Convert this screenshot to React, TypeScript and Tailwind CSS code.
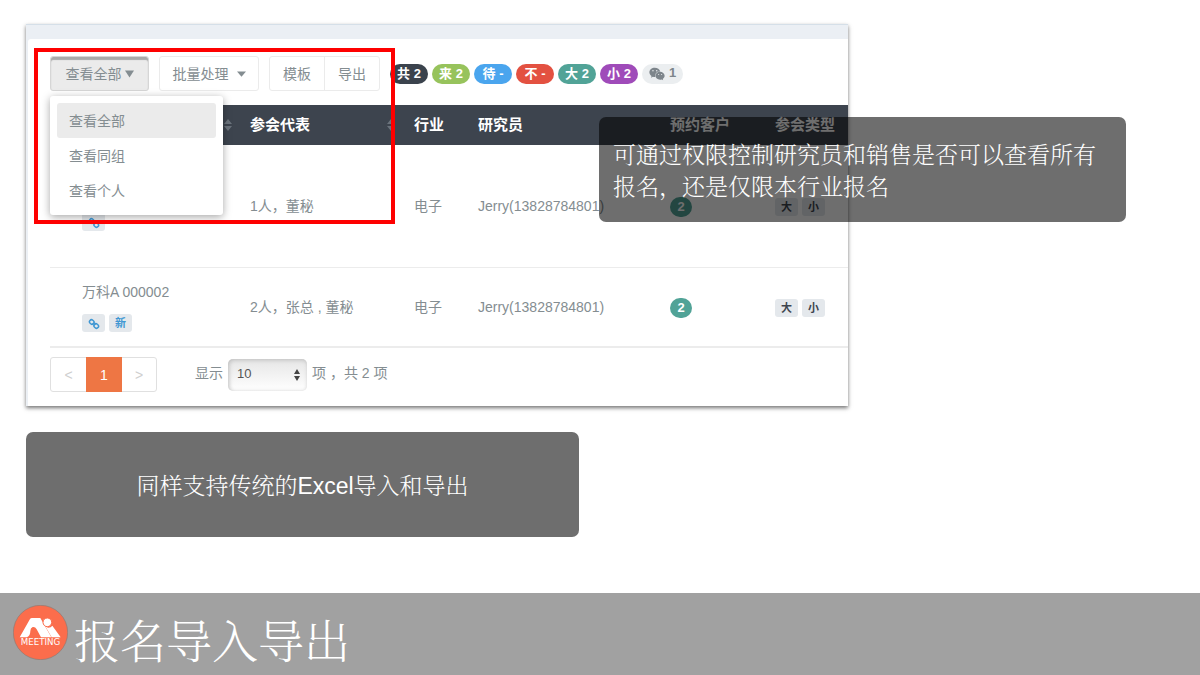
import { useState, type ReactNode } from 'react';
import { FaWeixin } from 'react-icons/fa';

interface Row {
  id: number;
  company?: string;
  isNew: boolean;
  guests: string;
  industry: string;
  researcher: string;
  booked: number;
  types: string[];
  height: string;
}

const rows: Row[] = [
  {
    id: 1,
    isNew: false,
    guests: '1人，董秘',
    industry: '电子',
    researcher: 'Jerry(13828784801)',
    booked: 2,
    types: ['大', '小'],
    height: 'h-[122px]',
  },
  {
    id: 2,
    company: '万科A 000002',
    isNew: true,
    guests: '2人，张总 , 董秘',
    industry: '电子',
    researcher: 'Jerry(13828784801)',
    booked: 2,
    types: ['大', '小'],
    height: 'h-20',
  },
];

const counters = [
  { label: '共 2', color: 'bg-[#3b434d]' },
  { label: '来 2', color: 'bg-[#97c35c]' },
  { label: '待 -', color: 'bg-[#4aa5ee]' },
  { label: '不 -', color: 'bg-[#e35141]' },
  { label: '大 2', color: 'bg-[#51a397]' },
  { label: '小 2', color: 'bg-[#9f4bb9]' },
];

const views = ['查看全部', '查看同组', '查看个人'];

function Caret({ className = '' }: { className?: string }) {
  return (
    <svg viewBox="0 0 10 8" className={className} fill="currentColor" preserveAspectRatio="none" aria-hidden="true">
      <path d="M0 0.5h10L5 7.5z" />
    </svg>
  );
}

function SortIcon() {
  return (
    <svg viewBox="0 0 8 12" className="h-3 w-2 shrink-0" fill="#6b737c" aria-hidden="true">
      <path d="M4 0l4 5H0zM4 12l4-5H0z" />
    </svg>
  );
}

function ChainIcon() {
  return (
    <svg viewBox="0 0 12 12" className="h-3 w-3" fill="none" stroke="#3f97d3" strokeWidth="1.5" aria-hidden="true">
      <g transform="rotate(42 6 6)">
        <rect x="0.6" y="4" width="4.8" height="4" rx="2" />
        <rect x="6.6" y="4" width="4.8" height="4" rx="2" />
        <path d="M4.4 6h3.2" />
      </g>
    </svg>
  );
}

function Tag({ children, className = '' }: { children: ReactNode; className?: string }) {
  return (
    <span
      className={`inline-flex h-[18px] min-w-[23px] items-center justify-center rounded-[3px] bg-[#e4e8ec] px-1 pt-[2px] text-[11px] font-bold ${className}`}
    >
      {children}
    </span>
  );
}

function Logo() {
  return (
    <svg viewBox="0 0 165 165" className="h-[55px] w-[55px] shrink-0" role="img" aria-label="MEETING">
      <circle cx="82.5" cy="82.5" r="81.5" fill="#fb6d4c" stroke="#8c7a74" strokeWidth="2" />
      <path
        d="M20 97L51 42Q53 39 57 39H82L115 97H84L71 73Q66 64 59 66Q52 69 52 78Q52 92 42 97z"
        fill="#fff"
      />
      <path d="M94 58Q98 68 106 68Q114 68 118 62L143 97H116L96 62z" fill="#fff" />
      <circle cx="103" cy="52" r="13" fill="#fff" stroke="#fb6d4c" strokeWidth="3" />
      <text x="82.5" y="119" textAnchor="middle" fill="#fff" fontSize="26" fontFamily="DejaVu Sans, sans-serif">
        MEETING
      </text>
    </svg>
  );
}

function Toolbar() {
  const [open, setOpen] = useState(true);
  const [view, setView] = useState(views[0]);

  return (
    <div className="flex flex-wrap items-center pl-[22px]">
      <div className="relative">
        <button
          type="button"
          aria-haspopup="menu"
          aria-expanded={open}
          onClick={() => setOpen(!open)}
          className="flex h-[35px] w-[99px] items-center justify-center gap-[3px] rounded-[3px] border border-[#d6d6d6] bg-[#ebebeb] shadow-[inset_0_3px_1px_#a9a9a9]"
        >
          {view}
          <Caret className="h-2 w-[9px]" />
        </button>
        {open && (
          <div
            role="menu"
            className="absolute top-10 left-0 z-10 w-[173px] rounded-[3px] bg-white p-[7px] shadow-[0_2px_8px_rgba(0,0,0,0.35)]"
          >
            {views.map((item) => (
              <button
                key={item}
                type="button"
                role="menuitem"
                onClick={() => {
                  setView(item);
                  setOpen(false);
                }}
                className={`block h-[35px] w-full rounded-[3px] px-3 text-left ${item === view ? 'bg-[#ebebeb]' : ''}`}
              >
                {item}
              </button>
            ))}
          </div>
        )}
      </div>
      <button
        type="button"
        className="ml-[10px] flex h-[35px] w-[100px] items-center justify-center gap-2 rounded-[3px] border border-[#ebebeb]"
      >
        批量处理
        <Caret className="h-[6px] w-[9px]" />
      </button>
      <div className="ml-[10px] flex h-[35px] rounded-[3px] border border-[#ebebeb]">
        <button type="button" className="w-[55px] border-r border-[#ebebeb]">
          模板
        </button>
        <button type="button" className="w-[54px]">
          导出
        </button>
      </div>
      <div className="ml-[10px] flex gap-1 text-[13px] font-bold text-white">
        {counters.map(({ label, color }) => (
          <span
            key={label}
            className={`flex h-5 min-w-[38px] items-center justify-center rounded-full px-[7px] pt-px whitespace-pre ${color}`}
          >
            {label}
          </span>
        ))}
        <span className="flex h-5 items-center gap-1 rounded-full bg-[#ebeef0] px-[7px] text-[#7d858b]">
          <FaWeixin className="h-4 w-4" />1
        </span>
      </div>
    </div>
  );
}

function AttendeeTable() {
  return (
    <table className="w-full table-fixed border-collapse text-left">
      <colgroup>
        <col className="w-[192px]" />
        <col className="w-[165px]" />
        <col className="w-[63px]" />
        <col className="w-[192px]" />
        <col className="w-[105px]" />
        <col className="w-[81px]" />
      </colgroup>
      <thead>
        <tr className="h-10 bg-[#3d444e] text-[15px] text-white">
          <th className="pr-[10px]">
            <div className="flex justify-end">
              <SortIcon />
            </div>
          </th>
          <th className="pr-3 pl-2">
            <div className="flex items-center justify-between">
              参会代表
              <SortIcon />
            </div>
          </th>
          <th className="pl-[7px] whitespace-nowrap">行业</th>
          <th className="pl-2 whitespace-nowrap">研究员</th>
          <th className="pl-2 whitespace-nowrap">预约客户</th>
          <th className="pl-2 whitespace-nowrap">参会类型</th>
        </tr>
      </thead>
      <tbody>
        {rows.map((row) => (
          <tr key={row.id} className={`border-b border-[#ececec] last:border-b-2 ${row.height}`}>
            <td className="pl-8">
              <div className="h-5 leading-5">{row.company}</div>
              <div className="mt-3 flex gap-1">
                <Tag>
                  <ChainIcon />
                </Tag>
                {row.isNew && <Tag className="text-[#3f97d3]">新</Tag>}
              </div>
            </td>
            <td className="pl-2">{row.guests}</td>
            <td className="pl-[7px]">{row.industry}</td>
            <td className="pl-2">{row.researcher}</td>
            <td className="pt-px pl-2">
              <span className="inline-flex h-5 w-[22px] items-center justify-center rounded-full bg-[#51a397] text-[13px] font-bold text-white">
                {row.booked}
              </span>
            </td>
            <td className="pt-[2px] pl-2">
              <div className="flex gap-1">
                {row.types.map((type) => (
                  <Tag key={type} className="text-[#3d444e]">
                    {type}
                  </Tag>
                ))}
              </div>
            </td>
          </tr>
        ))}
      </tbody>
    </table>
  );
}

function Pagination() {
  return (
    <div className="flex items-center pt-[9px] pb-[14px]">
      <nav className="flex h-[35px] rounded-[3px] border border-[#e0e0e0] text-[#cfcfcf]">
        <button type="button" disabled className="w-[35px]">
          &lt;
        </button>
        <button type="button" aria-current="page" className="-my-px w-9 bg-[#ee7644] text-white">
          1
        </button>
        <button type="button" disabled className="w-[34px]">
          &gt;
        </button>
      </nav>
      <label htmlFor="page-size" className="ml-[38px] pb-1">
        显示
      </label>
      <div className="relative mx-[5px]">
        <select
          id="page-size"
          defaultValue="10"
          className="h-8 w-[79px] appearance-none rounded-[5px] bg-gradient-to-b from-[#e6e6e6] to-white pl-[9px] text-[13px] text-[#555] shadow-[inset_1px_1px_4px_#bdbdbd]"
        >
          <option>10</option>
          <option>25</option>
          <option>50</option>
        </select>
        <svg
          viewBox="0 0 6 12"
          className="pointer-events-none absolute top-[10px] right-[7px] h-3 w-[6px]"
          fill="#444"
          aria-hidden="true"
        >
          <path d="M3 0l3 5H0zM3 12l3-5H0z" />
        </svg>
      </div>
      <span className="pb-1">项 ，共 2 项</span>
    </div>
  );
}

export default function App() {
  return (
    <div className="flex min-h-screen flex-col bg-white font-['Liberation_Sans','Noto_Sans_CJK_SC',sans-serif]">
      <main className="relative flex-1 px-[26px] pt-6 pb-14">
        <section className="relative w-full max-w-[822px] border-t border-[#d5dfe8] bg-[#ebeff4] pt-[14px] pl-[2px] text-sm text-[#848d91] shadow-[0_2px_4px_rgba(0,0,0,0.55)]">
          <div className="rounded-tl-[3px] bg-white pt-[17px]">
            <Toolbar />
            <div className="mt-[14px] pl-[22px]">
              <AttendeeTable />
              <Pagination />
            </div>
          </div>
          {/* highlight frame around the view switcher */}
          <div className="pointer-events-none absolute top-[23px] left-2 z-20 h-[176px] w-[361px] border-4 border-[#fe0000]" />
        </section>

        <p className="absolute top-[117px] left-[599px] z-30 h-[105px] w-[527px] rounded-[7px] bg-black/57 px-[14px] pt-[22px] font-['Liberation_Sans','Noto_Serif_CJK_SC','Noto_Sans_CJK_SC',serif] text-[23px] leading-8 font-light text-white">
          可通过权限控制研究员和销售是否可以查看所有报名，还是仅限本行业报名
        </p>

        <p className="mt-[26px] flex min-h-[105px] w-full max-w-[553px] items-center justify-center rounded-[7px] bg-[#6e6e6e] pt-1 font-['Liberation_Sans','Noto_Serif_CJK_SC','Noto_Sans_CJK_SC',serif] text-[23px] font-light text-white">
          同样支持传统的Excel导入和导出
        </p>
      </main>

      <footer className="flex gap-[6px] bg-[#a1a1a1] px-[13px] pt-3 pb-2">
        <Logo />
        <h1 className="pt-3 font-['Liberation_Sans','Noto_Serif_CJK_SC','Noto_Sans_CJK_SC',serif] text-[46px] leading-[50px] font-light text-white">
          报名导入导出
        </h1>
      </footer>
    </div>
  );
}
